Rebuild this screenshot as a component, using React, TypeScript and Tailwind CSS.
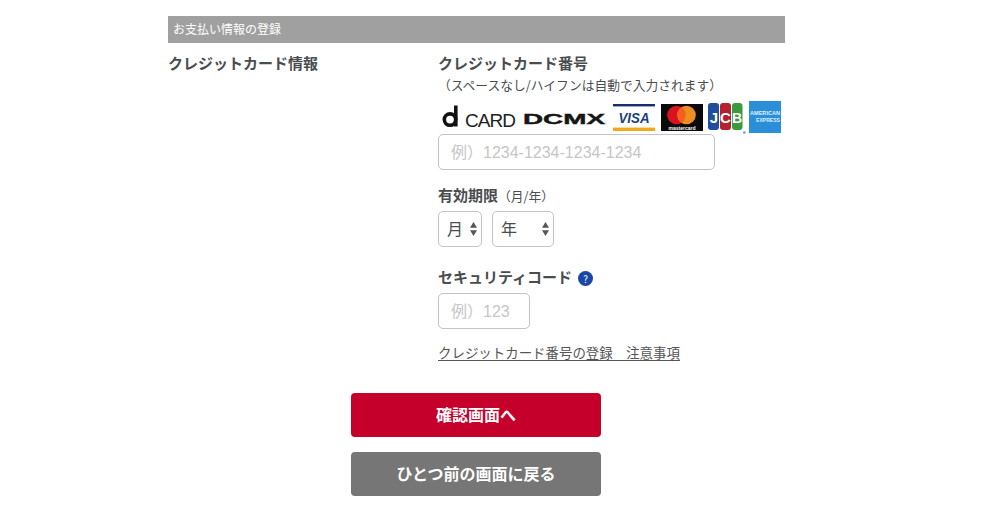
import React from "react";

function DCard() {
  return (
    <svg width="76" height="26" viewBox="0 0 76 26" className="shrink-0">
      <circle cx="9" cy="15.6" r="5.7" fill="none" stroke="#111" strokeWidth="3.6" />
      <rect x="13" y="1.5" width="3.6" height="21" fill="#111" />
      <text x="24" y="22.5" fontFamily="'Liberation Sans', sans-serif" fontSize="19" fill="#222" textLength="51" lengthAdjust="spacing">CARD</text>
    </svg>
  );
}

function Dcmx() {
  return (
    <svg width="84" height="15" viewBox="0 0 84 15" className="shrink-0">
      <text x="0" y="13.5" fontFamily="'Liberation Sans', sans-serif" fontWeight="700" fontSize="15" fill="#161616" stroke="#161616" strokeWidth="0.4" textLength="82" lengthAdjust="spacingAndGlyphs">DCMX</text>
      <circle cx="83" cy="13" r="0.6" fill="#999" />
    </svg>
  );
}

function Visa() {
  return (
    <svg width="42" height="27" viewBox="0 0 42 27" className="shrink-0">
      <rect width="42" height="27" fill="#fff" />
      <rect x="0" y="0" width="42" height="2.4" fill="#1b2f6b" />
      <rect x="0" y="23.6" width="42" height="3.4" fill="#f0a91c" />
      <text x="21" y="19" textAnchor="middle" fontFamily="'Liberation Sans', sans-serif" fontWeight="700" fontStyle="italic" fontSize="15" fill="#1b3f7f" textLength="31" lengthAdjust="spacingAndGlyphs">VISA</text>
    </svg>
  );
}

function Master() {
  return (
    <svg width="42" height="27" viewBox="0 0 42 27" className="shrink-0">
      <rect width="42" height="27" fill="#0a0a0a" />
      <circle cx="15.5" cy="11" r="9.3" fill="#d8131f" />
      <circle cx="25.5" cy="11" r="9.3" fill="#ee8e22" />
      <path d="M20.5 3.2a9.3 9.3 0 0 1 0 15.6a9.3 9.3 0 0 1 0-15.6z" fill="#f2601c" />
      <text x="21" y="25.5" textAnchor="middle" fontFamily="'Liberation Sans', sans-serif" fontSize="4.8" fontWeight="700" fill="#fff" textLength="27" lengthAdjust="spacingAndGlyphs">mastercard</text>
    </svg>
  );
}

function Jcb() {
  return (
    <svg width="38" height="31" viewBox="0 0 38 31" className="shrink-0">
      <rect x="0" y="0" width="11" height="27" rx="3" fill="#1d4f9c" />
      <rect x="12" y="0" width="11" height="27" rx="3" fill="#b5202f" />
      <rect x="24" y="0" width="10.5" height="27" rx="3" fill="#3a9a40" />
      <text x="6" y="20" textAnchor="middle" fontFamily="'Liberation Sans', sans-serif" fontWeight="700" fontSize="15" fill="#fff">J</text>
      <text x="17.5" y="20" textAnchor="middle" fontFamily="'Liberation Sans', sans-serif" fontWeight="700" fontSize="15" fill="#fff">C</text>
      <text x="29" y="20" textAnchor="middle" fontFamily="'Liberation Sans', sans-serif" fontWeight="700" fontSize="14" fill="#fff">B</text>
      <circle cx="36.3" cy="29.5" r="1.3" fill="#6f9fc8" />
    </svg>
  );
}

function Amex() {
  return (
    <svg width="32" height="32" viewBox="0 0 32 32" className="shrink-0">
      <rect width="32" height="32" fill="#2a8fd8" />
      <text x="16" y="14.2" textAnchor="middle" fontFamily="'Liberation Sans', sans-serif" fontWeight="700" fontSize="5.6" fill="#dff0fb" textLength="30" lengthAdjust="spacingAndGlyphs">AMERICAN</text>
      <text x="19" y="21" textAnchor="middle" fontFamily="'Liberation Sans', sans-serif" fontWeight="700" fontSize="5.6" fill="#dff0fb" textLength="24" lengthAdjust="spacingAndGlyphs">EXPRESS</text>
    </svg>
  );
}

function Arrows() {
  return (
    <svg width="9" height="16" viewBox="0 0 9 16" className="shrink-0">
      <path d="M4.5 1 L8 6.8 H1 Z" fill="#555" />
      <path d="M4.5 15 L8 9.2 H1 Z" fill="#555" />
    </svg>
  );
}

const field =
  "border border-[#c4c4c4] rounded-[5px] bg-white text-[16px] h-[36px] pl-3 pt-[2px] outline-none placeholder:text-[#c6c6c6] font-['Liberation_Sans','Noto_Sans_CJK_JP',sans-serif]";

export default function App() {
  return (
    <div className="w-[1003px] h-[519px] bg-white pl-[168px] pt-4 overflow-hidden font-['Noto_Sans_CJK_JP','Liberation_Sans',sans-serif] text-[#4a4d50]">
      <div className="w-[617px]">
        <div className="h-[27px] bg-[#a0a0a0] text-white text-[12px] leading-[26px] pl-[5px]">お支払い情報の登録</div>
        <div className="flex mt-[9px]">
          <div className="w-[270px] shrink-0 text-[15px] font-bold leading-[22px]">クレジットカード情報</div>
          <div className="flex-1 min-w-0">
            <div className="text-[15px] font-bold leading-[22px]">クレジットカード番号</div>
            <div className="text-[12.75px] leading-[18px] mt-[2px] whitespace-nowrap">（スペースなし/ハイフンは自動で入力されます）</div>
            <div className="flex items-center h-[34px] mt-[6px] pl-[3px]">
              <DCard />
              <div className="ml-[6px]"><Dcmx /></div>
              <div className="ml-[6px]"><Visa /></div>
              <div className="ml-[6px]"><Master /></div>
              <div className="ml-[5px] mt-[2px]"><Jcb /></div>
              <div className="ml-[3px] -mt-[1px]"><Amex /></div>
            </div>
            <input className={`${field} block w-[277px]`} placeholder="例）1234-1234-1234-1234" />
            <div className="mt-[14px] leading-[22px] flex items-baseline">
              <span className="text-[15px] font-bold">有効期限</span>
              <span className="text-[12.75px]">（月/年）</span>
            </div>
            <div className="flex gap-[10px] mt-[4px]">
              <div className="w-[44px] h-[36px] border border-[#c4c4c4] rounded-[5px] flex items-center pl-2 pr-[3px] justify-between text-[16px]">
                <span className="-mt-[3px]">月</span>
                <Arrows />
              </div>
              <div className="w-[62px] h-[36px] border border-[#c4c4c4] rounded-[5px] flex items-center pl-2 pr-[3px] justify-between text-[16px]">
                <span className="-mt-[3px]">年</span>
                <Arrows />
              </div>
            </div>
            <div className="mt-[19px] flex items-center h-[22px]">
              <span className="text-[15px] font-bold leading-[22px]">セキュリティコード</span>
              <span className="ml-[6px] mt-[2px] w-[15px] h-[15px] rounded-full bg-[#1a47a3] text-white text-[10px] leading-[15px] text-center">?</span>
            </div>
            <input className={`${field} block w-[92px] mt-[5px]`} placeholder="例）123" />
            <a className="block w-fit mt-[13px] text-[13.45px] leading-[20px] underline underline-offset-2 whitespace-nowrap text-[#555]">クレジットカード番号の登録　注意事項</a>
          </div>
        </div>
        <div className="ml-[183px] w-[250px] mt-[31px] flex flex-col gap-[15px]">
          <button className="h-[44px] pb-[2px] rounded-[4px] bg-[#c4002b] text-white text-[16px] font-bold">確認画面へ</button>
          <button className="h-[44px] pb-[2px] rounded-[4px] bg-[#767676] text-white text-[16px] font-bold">ひとつ前の画面に戻る</button>
        </div>
      </div>
    </div>
  );
}
